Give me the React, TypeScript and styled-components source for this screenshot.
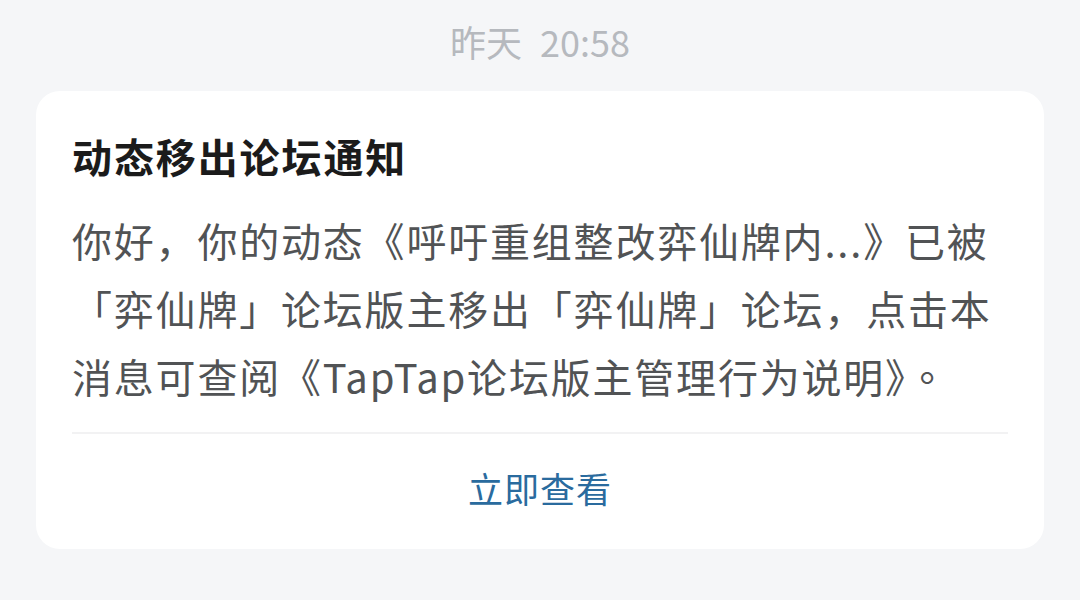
import React from "react";
import styled, { createGlobalStyle } from "styled-components";

const Global = createGlobalStyle`
  html, body { margin: 0; padding: 0; background: #f5f6f8; }
  body { font-family: "Noto Sans CJK SC", "Noto Sans", sans-serif; }
`;

const Page = styled.div`
  width: 1080px;
  height: 600px;
  box-sizing: border-box;
  padding: 0 36px;
  display: flex;
  flex-direction: column;
  background: #f5f6f8;
`;

const Time = styled.div`
  height: 91px;
  display: flex;
  align-items: center;
  justify-content: center;
  padding-bottom: 9px;
  box-sizing: border-box;
  font-size: 36px;
  color: #b6b9be;
  word-spacing: 10px;
`;

const Card = styled.div`
  background: #ffffff;
  border-radius: 24px;
  padding: 0 36px;
  display: flex;
  flex-direction: column;
`;

const Title = styled.div`
  margin-top: 37px;
  font-size: 40px;
  line-height: 56px;
  font-weight: 700;
  color: #1b1b1b;
  letter-spacing: 1.9px;
`;

const Body = styled.div`
  margin-top: 22px;
  font-size: 40px;
  line-height: 68px;
  color: #515355;
  letter-spacing: 1.8px;
`;

const CenteredMark = styled.span`
  font-family: "Noto Sans CJK TC", "Noto Sans CJK SC", sans-serif;
  letter-spacing: 0;
`;

const Divider = styled.div`
  height: 2px;
  background: #f2f2f3;
  margin-top: 22px;
`;

const Action = styled.div`
  height: 115px;
  box-sizing: border-box;
  padding-bottom: 8px;
  display: flex;
  align-items: center;
  justify-content: center;
  font-size: 35px;
  color: #2a6b9e;
  letter-spacing: 1px;
`;

export default function App() {
  return (
    <>
      <Global />
      <Page>
        <Time>昨天 20:58</Time>
        <Card>
          <Title>动态移出论坛通知</Title>
          <Body>
            你好，你的动态《呼吁重组整改弈仙牌内...》已被「弈仙牌」论坛版主移出「弈仙牌」论坛，点击本消息可查阅《TapTap论坛版主管理行为说明》<CenteredMark>。</CenteredMark>
          </Body>
          <Divider />
          <Action>立即查看</Action>
        </Card>
      </Page>
    </>
  );
}
